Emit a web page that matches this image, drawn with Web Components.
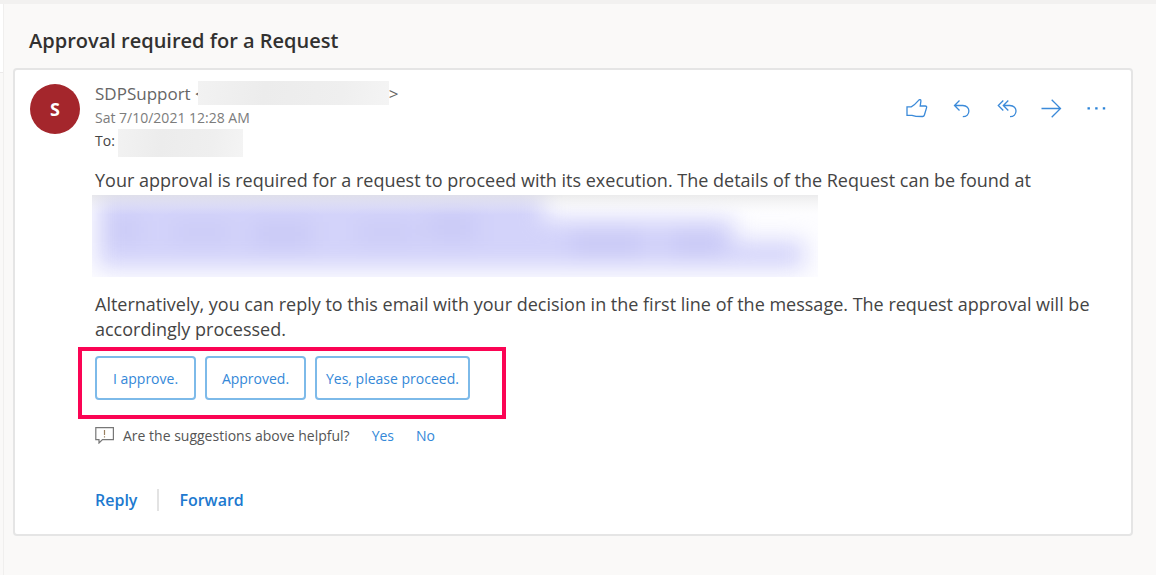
<!DOCTYPE html>
<html lang="en">
<head>
<meta charset="utf-8">
<meta name="viewport" content="width=device-width, initial-scale=1">
<title>Approval required for a Request</title>
<style>
  html, body { margin: 0; min-height: 100%; background: #faf9f8; }
  body { font-family: "Open Sans", "Noto Sans", sans-serif; color: #444; }
</style>
</head>
<body>
<mail-reader>
  <span slot="subject">Approval required for a Request</span>
  <mail-message>
    <user-avatar slot="avatar" initial="S"></user-avatar>
    <mail-sender slot="sender"></mail-sender>
    <mail-toolbar slot="tools"></mail-toolbar>
    <mail-body></mail-body>
    <reply-suggestions>
      <suggestion-chip>I approve.</suggestion-chip>
      <suggestion-chip>Approved.</suggestion-chip>
      <suggestion-chip>Yes, please proceed.</suggestion-chip>
    </reply-suggestions>
    <suggestion-feedback></suggestion-feedback>
    <mail-actions></mail-actions>
  </mail-message>
</mail-reader>

<script>
const define = (name, html, setup) => customElements.define(name, class extends HTMLElement {
  constructor() {
    super();
    this.attachShadow({ mode: "open" }).innerHTML =
      `<style>*{box-sizing:border-box} button{font:inherit;color:inherit;background:none;border:0;padding:0;margin:0;cursor:pointer}</style>${html}`;
  }
  connectedCallback() { if (setup) setup(this); }
});

define("mail-reader", `
<style>
  :host { display: grid; grid-template-columns: 4px 1fr; min-height: 100vh; box-sizing: border-box; border-top: 4px solid #f2f1f0; }
  aside { border-right: 1px solid #f0efee; }
  aside::before { content: ""; display: block; height: 68px; background: #fff; border-bottom: 1px solid #eceaea; }
  main { padding: 20px 23px 36px 9px; min-width: 0; }
  h1 { margin: 0 0 10px 16px; font-size: 20px; line-height: 34px; font-weight: 600; color: #323130; }
</style>
<aside></aside>
<main><h1><slot name="subject"></slot></h1><slot></slot></main>`);

define("mail-message", `
<style>
  :host { display: block; background: #fff; border: 2px solid #e5e5e5; border-radius: 4px; padding: 11px 15px 23px 15px; }
  article { display: grid; grid-template-columns: 50px 1fr auto; column-gap: 15px; }
  .content { grid-column: 2 / 4; min-width: 0; }
</style>
<article>
  <slot name="avatar"></slot><slot name="sender"></slot><slot name="tools"></slot>
  <div class="content"><slot></slot></div>
</article>`);

define("user-avatar", `
<style>
  :host { display: block; padding-top: 3px; }
  div { width: 50px; height: 50px; border-radius: 50%; background: #a4262c; color: #fff; font-size: 18px; font-weight: 700; line-height: 51px; text-align: center; }
</style>
<div></div>`, el => { el.shadowRoot.querySelector("div").textContent = el.getAttribute("initial"); });

define("redacted-text", `
<style>
  :host { display: block; flex: none; background: linear-gradient(100deg, #f2f2f2, #ececec 35%, #efefef 75%, #f4f4f4); }
</style>`);

define("mail-sender", `
<style>
  :host { display: block; color: #666; font-size: 14px; }
  div { display: flex; align-items: center; height: 24px; white-space: pre; }
  .name { font-size: 17px; }
  .name redacted-text { width: 191px; height: 24px; margin-left: -7px; position: relative; }
  .date { color: #7c7c7c; }
  .to { align-items: flex-start; line-height: 24px; font-weight: 500; color: #444; }
  .to redacted-text { width: 125px; height: 28px; margin-left: 3px; }
</style>
<div class="name"><span>SDPSupport &lt;</span><redacted-text></redacted-text><span>&gt;</span></div>
<div class="date">Sat 7/10/2021 12:28 AM</div>
<div class="to"><span>To:</span><redacted-text></redacted-text></div>`);

define("mail-toolbar", `
<style>
  :host { display: flex; gap: 21px; padding: 15px 7px 0 0; align-items: start; }
  button { display: block; width: 24px; height: 24px; }
  svg { display: block; fill: none; stroke: #3b8ad9; stroke-width: 1.3; }
</style>
<button aria-label="Like"><svg width="24" height="24" viewBox="0 0 24 24"><path d="M2 10.8H6.2C8.5 9.7 11 7.5 13.6 4.4C14.5 3 16.2 3.6 15.9 5.2L15.2 10H20.2Q22 10.2 21.6 11.6L19.4 19Q18.9 20.6 17.4 20.5L11 20.3L7 19.3H2Z"/></svg></button>
<button aria-label="Reply"><svg width="24" height="24" viewBox="0 0 24 24"><path d="M9.5 4.5 4.5 9.5 9.5 14.5M4.5 9.5H12.8C21 9.5 20.8 20.7 12.8 20.7"/></svg></button>
<button aria-label="Reply all"><svg width="24" height="24" viewBox="0 0 24 24"><path d="M8.3 4.5 3.3 9.5 8.3 14.5M13.3 4.5 8.3 9.5 13.3 14.5M8.3 9.5H14.8C23.3 9.5 22.8 20.7 15 20.7"/></svg></button>
<button aria-label="Forward"><svg width="24" height="24" viewBox="0 0 24 24"><path d="M1.5 12.5H20.5M11.7 3.7 20.5 12.5 11.7 21.3"/></svg></button>
<button aria-label="More actions"><svg width="24" height="24" viewBox="0 0 24 24"><path fill="#2b83d8" stroke="none" d="M2.5 11.2h2.4v2.4H2.5zM10.2 11.2h2.4v2.4h-2.4zM17.8 11.2h2.4v2.4h-2.4z"/></svg></button>`);

define("redacted-links", `
<style>
  :host { display: block; max-width: 726px; height: 82px; margin-left: -3px; overflow: hidden; background: #fff; }
  svg { display: block; width: 100%; height: 100%; }
</style>
<svg viewBox="0 0 726 82" preserveAspectRatio="none" aria-hidden="true">
  <defs>
    <filter id="soft" x="-10%" y="-40%" width="120%" height="180%" color-interpolation-filters="sRGB"><feGaussianBlur stdDeviation="11"/></filter>
    <linearGradient id="top" x2="0" y2="1"><stop offset="0" stop-color="#e4e4e4" stop-opacity=".7"/><stop offset=".24" stop-color="#f4f4f4" stop-opacity="0"/></linearGradient>
  </defs>
  <rect width="726" height="82" fill="#fdfdff"/>
  <g filter="url(#soft)">
    <path fill="#d3d3fa" d="M6 -20H452V24H642V46H712V73H6Z"/>
    <path fill="#c9c9f6" d="M16 25h32v20H16zM80 30h60v14H80zM160 27h60v24h-60zM265 30h60v14h-60zM335 20h50v24h-50zM480 36h70v24h-70zM580 36h50v24h-50z"/>
  </g>
  <rect width="726" height="82" fill="url(#top)"/>
</svg>`);

define("mail-body", `
<style>
  :host { display: block; padding-top: 15px; font-size: 18px; line-height: 25px; }
  p { margin: 0; }
  redacted-links { margin-top: 2px; margin-bottom: 15px; }
</style>
<p>Your approval is required for a request to proceed with its execution. The details of the Request can be found at</p>
<redacted-links></redacted-links>
<p>Alternatively, you can reply to this email with your decision in the first line of the message. The request approval will be accordingly processed.</p>`);

define("reply-suggestions", `
<style>
  :host { display: flex; flex-wrap: wrap; gap: 9px; width: fit-content; box-sizing: border-box; margin: 5px 0 0 -17px; border: 4px solid #fb0454; padding: 5px 32px 15px 13px; }
</style>
<slot></slot>`);

define("suggestion-chip", `
<style>
  :host { display: block; }
  button { min-width: 101px; height: 44px; padding: 0 9px; border: 2px solid #7dbae9; border-radius: 4px; font-size: 14px; color: #3488d8; white-space: nowrap; }
</style>
<button><slot></slot></button>`);

define("suggestion-feedback", `
<style>
  :host { display: flex; align-items: center; height: 24px; margin-top: 4px; font-size: 14px; color: #555; }
  svg { display: block; margin-right: 8px; flex: none; }
  button { margin-left: 22px; color: #3488d8; }
</style>
<svg width="20" height="18" viewBox="0 0 20 18" fill="none" stroke="#777" stroke-width="1.2" aria-hidden="true"><path d="M.8 1.6H18.4V13.6H7.5L4 17V13.6H.8Z"/><path stroke="#9a8060" d="M9.5 4V9M9.5 10.3V11.6"/></svg>
<span>Are the suggestions above helpful?</span><button>Yes</button><button>No</button>`);

define("mail-actions", `
<style>
  :host { display: flex; align-items: center; margin-top: 42px; font-size: 16px; font-weight: 600; color: #2079cf; height: 22px; }
  i { width: 2px; height: 22px; background: #e3e3e3; margin: 0 20px; }
</style>
<button>Reply</button><i></i><button>Forward</button>`);
</script>
</body>
</html>
